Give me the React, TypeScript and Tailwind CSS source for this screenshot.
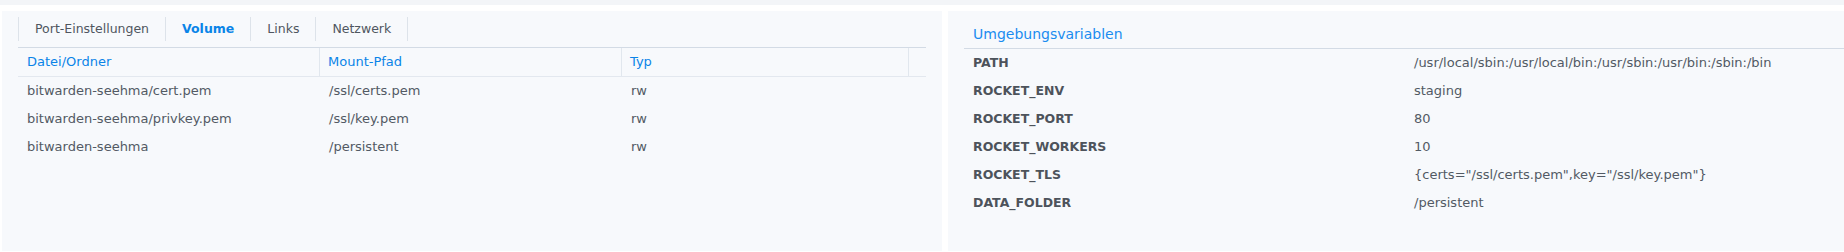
const font = { fontFamily: '"DejaVu Sans", Verdana, sans-serif' };

const tabs = [
	{ label: 'Port-Einstellungen', active: false },
	{ label: 'Volume', active: true },
	{ label: 'Links', active: false },
	{ label: 'Netzwerk', active: false },
];

const volumes = [
	{ file: 'bitwarden-seehma/cert.pem', mount: '/ssl/certs.pem', type: 'rw' },
	{ file: 'bitwarden-seehma/privkey.pem', mount: '/ssl/key.pem', type: 'rw' },
	{ file: 'bitwarden-seehma', mount: '/persistent', type: 'rw' },
];

const envVars = [
	{ key: 'PATH', value: '/usr/local/sbin:/usr/local/bin:/usr/sbin:/usr/bin:/sbin:/bin' },
	{ key: 'ROCKET_ENV', value: 'staging' },
	{ key: 'ROCKET_PORT', value: '80' },
	{ key: 'ROCKET_WORKERS', value: '10' },
	{ key: 'ROCKET_TLS', value: '{certs="/ssl/certs.pem",key="/ssl/key.pem"}' },
	{ key: 'DATA_FOLDER', value: '/persistent' },
];

const App = () => {
	return (
		<div className="w-[1844px] h-[252px] bg-white flex flex-col text-[13px] text-[#525a64] overflow-hidden" style={font}>
			{/* top strip */}
			<div className="h-[5px] bg-[#f3f5f8]"></div>

			<div className="flex flex-1 mt-[6px] mb-px gap-[6px] pl-[2px]">
				{/* Left panel: volumes */}
				<div className="w-[940px] bg-[#f7f9fc] pl-4 pr-4 pt-[6px]">
					<div className="flex h-6 border-l border-[#dde3ea] text-[12.5px]">
						{tabs.map((tab) => (
							<div
								key={tab.label}
								className={`flex items-center px-[16px] border-r border-[#dde3ea] ${
									tab.active ? 'font-bold text-[#0a84e8]' : 'text-[#4f5660]'
								}`}
							>
								{tab.label}
							</div>
						))}
					</div>

					<div className="mt-[6px] w-[908px] border-t border-[#d3dbe5]">
						<div className="flex h-[29px] border-b border-[#e3e8ef] text-[#0a84e8]">
							<div className="w-[302px] flex items-center pl-[9px] border-r border-[#e1e7ee]">Datei/Ordner</div>
							<div className="w-[302px] flex items-center pl-[8px] border-r border-[#e1e7ee]">Mount-Pfad</div>
							<div className="w-[287px] flex items-center pl-[8px] border-r border-[#e1e7ee]">Typ</div>
							<div className="flex-1"></div>
						</div>
						{volumes.map((v) => (
							<div key={v.file} className="flex h-[28px] items-center">
								<div className="w-[302px] pl-[9px]">{v.file}</div>
								<div className="w-[302px] pl-[9px]">{v.mount}</div>
								<div className="w-[287px] pl-[9px]">{v.type}</div>
							</div>
						))}
					</div>
				</div>

				{/* Right panel: environment */}
				<div className="flex-1 bg-[#f7f9fc] pl-4 pt-[11px]">
					<div className="h-[25px] flex items-center pl-[9px] text-[14px] text-[#1a8cf0]">Umgebungsvariablen</div>
					<div className="mt-[1px] border-t border-[#d3dbe5]">
						{envVars.map((env) => (
							<div key={env.key} className="flex h-[28px] items-center">
								<div className="w-[441px] pl-[9px] font-bold text-[12.5px] text-[#4d535b]">{env.key}</div>
								<div className="pl-[9px]">{env.value}</div>
							</div>
						))}
					</div>
				</div>
			</div>
		</div>
	);
};

export default App;
